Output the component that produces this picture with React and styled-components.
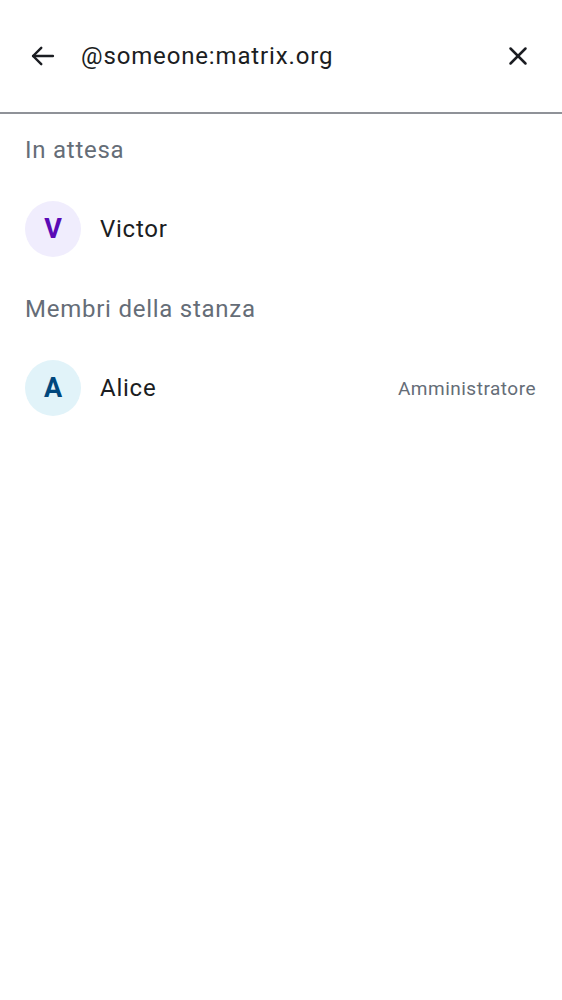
import React from 'react';
import styled, { createGlobalStyle } from 'styled-components';

const GlobalStyle = createGlobalStyle`
  body {
    margin: 0;
    background: #ffffff;
    font-family: Roboto, "Noto Sans", sans-serif;
    color: #1b1d22;
  }
`;

const Screen = styled.div`
  width: 562px;
  min-height: 1000px;
  background: #ffffff;
`;

const SearchBar = styled.div`
  display: flex;
  align-items: center;
  height: 114px;
  padding: 0 28px 0 27px;
  box-sizing: border-box;
  border-bottom: 2px solid #8f9298;
`;

const IconButton = styled.button`
  display: flex;
  align-items: center;
  justify-content: center;
  width: 32px;
  height: 32px;
  padding: 0;
  border: none;
  background: none;
  color: #1b1d22;
`;

const Query = styled.div`
  flex: 1;
  margin-left: 22px;
  font-size: 24px;
  letter-spacing: 0.85px;
  color: #1b1d22;
`;

const Section = styled.section`
  padding-top: 22px;
`;

const SectionTitle = styled.div`
  padding: 0 25px;
  height: 28px;
  line-height: 28px;
  font-size: 24px;
  letter-spacing: 0.75px;
  color: #656d77;
  margin-bottom: 21px;
`;

const MemberRow = styled.div`
  display: flex;
  align-items: center;
  height: 88px;
  padding: 0 26px 0 25px;
`;

const Avatar = styled.div`
  display: flex;
  align-items: center;
  justify-content: center;
  width: 56px;
  height: 56px;
  border-radius: 50%;
  background: ${(p) => p.bg};
  color: ${(p) => p.fg};
  font-size: 27px;
  font-weight: 700;
`;

const Name = styled.div`
  flex: 1;
  margin-left: 19px;
  font-size: 24px;
  letter-spacing: 0.75px;
  color: #1b1d22;
`;

const Role = styled.div`
  font-size: 19px;
  letter-spacing: 0.5px;
  color: #656d77;
`;

const BackIcon = () => (
  <svg width="28" height="28" viewBox="0 0 24 24" fill="none" stroke="currentColor" strokeWidth="2.1" strokeLinecap="round" strokeLinejoin="round">
    <path d="M20.5 12H3.5" />
    <path d="M10.5 5L3.5 12l7 7" />
  </svg>
);

const CloseIcon = () => (
  <svg width="20" height="20" viewBox="0 0 24 24" fill="none" stroke="currentColor" strokeWidth="3" strokeLinecap="round">
    <path d="M3 3l18 18" />
    <path d="M21 3L3 21" />
  </svg>
);

const sections = [
  {
    title: 'In attesa',
    members: [{ name: 'Victor', initial: 'V', bg: '#f0edfd', fg: '#5a0ab5' }],
  },
  {
    title: 'Membri della stanza',
    members: [{ name: 'Alice', initial: 'A', bg: '#e1f3f9', fg: '#00477d', role: 'Amministratore' }],
  },
];

const App = () => (
  <Screen>
    <GlobalStyle />
    <SearchBar>
      <IconButton aria-label="Indietro">
        <BackIcon />
      </IconButton>
      <Query>@someone:matrix.org</Query>
      <IconButton aria-label="Cancella">
        <CloseIcon />
      </IconButton>
    </SearchBar>
    {sections.map((section) => (
      <Section key={section.title}>
        <SectionTitle>{section.title}</SectionTitle>
        {section.members.map((m) => (
          <MemberRow key={m.name}>
            <Avatar bg={m.bg} fg={m.fg}>{m.initial}</Avatar>
            <Name>{m.name}</Name>
            {m.role && <Role>{m.role}</Role>}
          </MemberRow>
        ))}
      </Section>
    ))}
  </Screen>
);

export default App;
